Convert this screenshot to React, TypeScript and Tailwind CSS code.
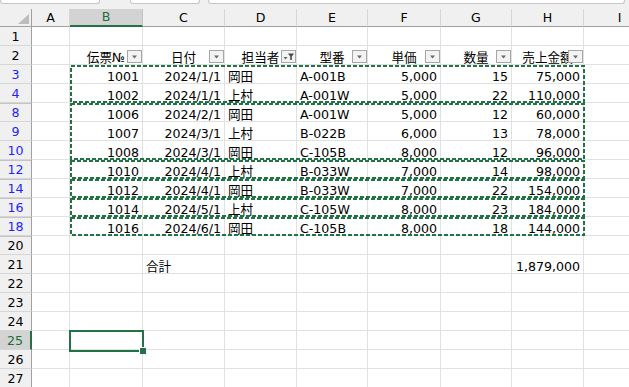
import React from 'react';

type Cell = { v: string; align?: 'l' | 'r' };
type Row = { n: number; blue?: boolean; afterHidden?: boolean; cells?: Record<string, Cell>; header?: boolean };

const cols = [
  { key: 'A', w: 'w-[38px]' },
  { key: 'B', w: 'w-[73px]' },
  { key: 'C', w: 'w-[82px]' },
  { key: 'D', w: 'w-[72px]' },
  { key: 'E', w: 'w-[71px]' },
  { key: 'F', w: 'w-[73px]' },
  { key: 'G', w: 'w-[71px]' },
  { key: 'H', w: 'w-[72px]' },
  { key: 'I', w: 'w-[72px]' },
];

const headers: Record<string, { label: string; filtered?: boolean }> = {
  B: { label: '伝票№' },
  C: { label: '日付' },
  D: { label: '担当者', filtered: true },
  E: { label: '型番' },
  F: { label: '単価' },
  G: { label: '数量' },
  H: { label: '売上金額' },
};

const data = (b: string, c: string, d: string, e: string, f: string, g: string, h: string): Record<string, Cell> => ({
  B: { v: b, align: 'r' },
  C: { v: c, align: 'r' },
  D: { v: d },
  E: { v: e },
  F: { v: f, align: 'r' },
  G: { v: g, align: 'r' },
  H: { v: h, align: 'r' },
});

const rows: Row[] = [
  { n: 1 },
  { n: 2, header: true },
  { n: 3, blue: true, cells: data('1001', '2024/1/1', '岡田', 'A-001B', '5,000', '15', '75,000') },
  { n: 4, blue: true, cells: data('1002', '2024/1/1', '上村', 'A-001W', '5,000', '22', '110,000') },
  { n: 8, blue: true, afterHidden: true, cells: data('1006', '2024/2/1', '岡田', 'A-001W', '5,000', '12', '60,000') },
  { n: 9, blue: true, cells: data('1007', '2024/3/1', '上村', 'B-022B', '6,000', '13', '78,000') },
  { n: 10, blue: true, cells: data('1008', '2024/3/1', '岡田', 'C-105B', '8,000', '12', '96,000') },
  { n: 12, blue: true, afterHidden: true, cells: data('1010', '2024/4/1', '上村', 'B-033W', '7,000', '14', '98,000') },
  { n: 14, blue: true, afterHidden: true, cells: data('1012', '2024/4/1', '岡田', 'B-033W', '7,000', '22', '154,000') },
  { n: 16, blue: true, afterHidden: true, cells: data('1014', '2024/5/1', '上村', 'C-105W', '8,000', '23', '184,000') },
  { n: 18, blue: true, afterHidden: true, cells: data('1016', '2024/6/1', '岡田', 'C-105B', '8,000', '18', '144,000') },
  { n: 20, afterHidden: true },
  { n: 21, cells: { C: { v: '合計' }, H: { v: '1,879,000', align: 'r' } } },
  { n: 22 },
  { n: 23 },
  { n: 24 },
  { n: 25 },
  { n: 26 },
  { n: 27 },
];

// copy marquee ranges (top/bottom y of visible row blocks)
const marquees = [
  [65, 103],
  [103, 160],
  [160, 179],
  [179, 198],
  [198, 217],
  [217, 236],
];

const FilterButton = ({ filtered }: { filtered?: boolean }) => (
  <div className="absolute right-0 bottom-[1px] w-[15px] h-[13px] border border-[#a6a6a6] bg-[#f3f3f3]">
    <svg width="13" height="11" viewBox="0 0 13 11" className="block">
      {filtered ? (
        <>
          <polygon points="1.5,6 5.5,6 3.5,8.5" fill="#5f5f5f" />
          <polygon points="6,2.5 12,2.5 9.8,5.5 9.8,9 8.2,9 8.2,5.5" fill="#4a4a4a" />
        </>
      ) : (
        <polygon points="4,4.5 9,4.5 6.5,7.5" fill="#6a6a6a" />
      )}
    </svg>
  </div>
);

const App = () => {
  return (
    <div className="relative w-[629px] h-[387px] overflow-hidden bg-white font-['DejaVu_Sans','Noto_Sans_CJK_JP',sans-serif] text-[12.6px] text-black">
      {/* bottom of the formula bar area */}
      <div className="h-[9px] bg-[#f0f0f0] flex gap-[30px] pr-[4px]">
        <div className="w-[100px] h-[4px] bg-white border border-t-0 border-[#c6c6c6] rounded-b-[3px]" />
        <div className="w-[70px] h-[4px] bg-white border border-t-0 border-[#c6c6c6] rounded-b-[3px] -ml-[0px]" />
        <div className="flex-1 h-[4px] bg-white border border-t-0 border-[#c6c6c6] rounded-b-[3px] -ml-[22px]" />
      </div>

      {/* column headers */}
      <div className="flex h-[18px] bg-[#f0f0f0]">
        <div className="relative w-[32px] flex-none border-r border-b border-[#a0a0a0]">
          <svg width="31" height="17" className="absolute left-0 top-0">
            <polygon points="29,5 29,15 18,15" fill="#bdbdbd" />
          </svg>
        </div>
        {cols.map((c) => (
          <div
            key={c.key}
            className={`${c.w} flex-none flex items-end justify-center leading-[13px] pb-[2px] ${
              c.key === 'B'
                ? 'bg-[#d3d3d3] text-[#1e6b40] border-r border-r-[#c2c2c2] border-b-2 border-b-[#217346]'
                : 'border-r border-r-[#d6d6d6] border-b border-b-[#a0a0a0]'
            }`}
          >
            {c.key}
          </div>
        ))}
      </div>

      {/* rows */}
      {rows.map((r) => {
        const sel = r.n === 25;
        return (
          <div key={r.n} className="flex h-[19px]">
            <div
              className={`w-[32px] flex-none flex items-end justify-center leading-[13px] pb-[2px] border-b border-b-[#d6d6d6] ${
                sel
                  ? 'bg-[#d3d3d3] text-[#1e6b40] border-r-2 border-r-[#217346]'
                  : `bg-[#f0f0f0] border-r border-r-[#a0a0a0] ${r.blue ? 'text-[#1f1fff]' : 'text-black'}`
              } ${r.afterHidden ? 'shadow-[inset_0_1px_0_#c4c4c4]' : ''}`}
            >
              {r.n}
            </div>
            {cols.map((c) => {
              const cell = r.cells?.[c.key];
              const head = r.header ? headers[c.key] : undefined;
              return (
                <div
                  key={c.key}
                  className={`${c.w} flex-none relative flex items-end leading-[13px] border-r border-b border-[#e1e1e1] whitespace-nowrap ${
                    head ? 'justify-center overflow-hidden' : cell?.align === 'r' ? 'justify-end pr-[3px]' : 'justify-start pl-[3px]'
                  }`}
                >
                  {head && (
                    <>
                      <span>{head.label}</span>
                      <FilterButton filtered={head.filtered} />
                    </>
                  )}
                  {cell && <span>{cell.v}</span>}
                </div>
              );
            })}
          </div>
        );
      })}

      {/* copy marquee over filtered rows */}
      <svg className="absolute left-0 top-0 pointer-events-none" width="629" height="387">
        {marquees.map(([t, b]) => (
          <rect
            key={t}
            x={71}
            y={t + 1}
            width={513}
            height={b - t - 2}
            fill="none"
            stroke="#217346"
            strokeWidth={2}
            strokeDasharray="4 2"
          />
        ))}
      </svg>

      {/* active cell B25 */}
      <div className="absolute left-[69px] top-[330px] w-[75px] h-[22px] border-2 border-[#217346] pointer-events-none" />
      <div className="absolute left-[139px] top-[347px] w-[7px] h-[7px] bg-[#217346] border-l border-t border-white" />
    </div>
  );
};

export default App;
